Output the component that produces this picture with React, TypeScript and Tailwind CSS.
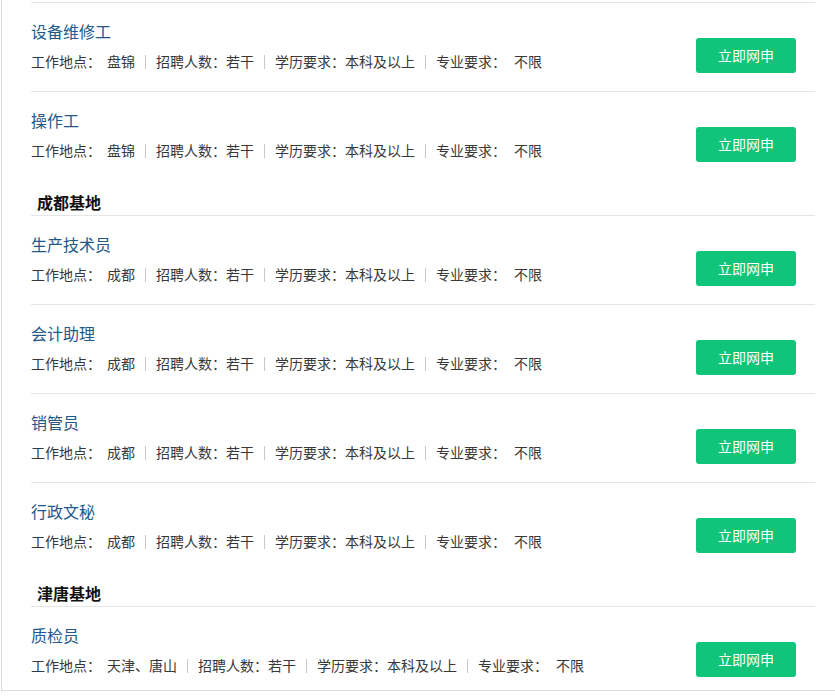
import React from 'react';

type Job = { title: string; place: string };

const sections: { name?: string; jobs: Job[] }[] = [
  {
    jobs: [
      { title: '设备维修工', place: '盘锦' },
      { title: '操作工', place: '盘锦' },
    ],
  },
  {
    name: '成都基地',
    jobs: [
      { title: '生产技术员', place: '成都' },
      { title: '会计助理', place: '成都' },
      { title: '销管员', place: '成都' },
      { title: '行政文秘', place: '成都' },
    ],
  },
  {
    name: '津唐基地',
    jobs: [{ title: '质检员', place: '天津、唐山' }],
  },
];

const Bar = () => <span className="mx-[10px] inline-block h-[14px] w-px bg-[#c8c8c8] align-[-2px]" />;

const JobRow: React.FC<{ job: Job; last: boolean }> = ({ job, last }) => (
  <div className={`box-content flex justify-between ${last ? 'h-[83px]' : 'h-[88px]'}`}>
    <div className="pt-[17px]">
      <h3 className="text-[16px] leading-[22px] text-[#22598c]">{job.title}</h3>
      <p className="mt-[8px] text-[14px] leading-[22px] text-[#383838] whitespace-nowrap">
        工作地点：<span className="ml-[6px]">{job.place}</span>
        <Bar />
        招聘人数：若干
        <Bar />
        学历要求：本科及以上
        <Bar />
        专业要求：<span className="ml-[8px]">不限</span>
      </p>
    </div>
    <div className="pt-[35px] pr-[19px]">
      <button className="h-[35px] w-[100px] rounded-[3px] bg-[#10c47a] text-[14px] text-white">立即网申</button>
    </div>
  </div>
);

export default function App() {
  const total = sections.reduce((n, s) => n + s.jobs.length, 0);
  let idx = 0;
  return (
    <div
      className="w-[835px] bg-white"
      style={{ fontFamily: '"Microsoft YaHei", "Noto Sans CJK SC", sans-serif' }}
    >
      <div className="ml-px border-l border-b border-[#dcdcdc] pl-[29px] pr-[20px]">
        <div className="h-[3px] border-b border-[#e5e5e5]" />
        {sections.map((s, si) => (
          <div key={si}>
            {s.name && (
              <div className="h-[36px] border-b border-[#e5e5e5] pt-[11px] pl-[6px]">
                <h2 className="text-[16px] font-bold leading-[22px] text-[#111]">{s.name}</h2>
              </div>
            )}
            <div className="divide-y divide-[#e5e5e5]">
              {s.jobs.map((j) => {
                idx += 1;
                return <JobRow key={j.title} job={j} last={idx === total} />;
              })}
            </div>
          </div>
        ))}
      </div>
    </div>
  );
}
